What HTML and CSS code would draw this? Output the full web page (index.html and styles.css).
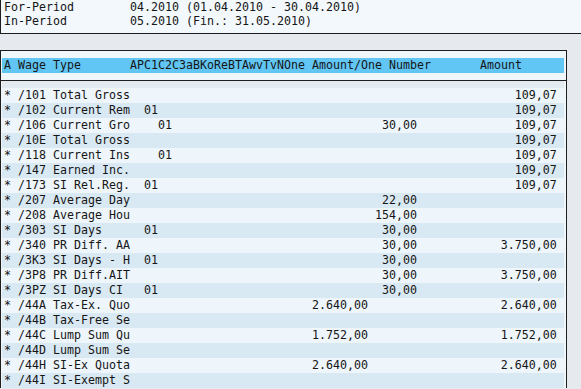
FILE: index.html
```html
<!DOCTYPE html>
<html>
<head>
<meta charset="utf-8">
<link rel="stylesheet" href="styles.css">
</head>
<body>
<div class="period">
  <div class="pline">For-Period        04.2010 (01.04.2010 - 30.04.2010)</div>
  <div class="pline">In-Period         05.2010 (Fin.: 31.05.2010)</div>
</div>
<div class="list">
  <div class="head">A Wage Type       APC1C2C3aBKoReBTAwvTvNOne Amount/One Number       Amount</div>
  <div class="sep"></div>
  <div class="gaprow"></div>
  <div class="rows">
    <div class="row"><span>*</span><span>/101</span><span>Total Gross</span><span></span><span></span><span></span><span>109,07</span></div>
    <div class="row"><span>*</span><span>/102</span><span>Current Rem</span><span>  01</span><span></span><span></span><span>109,07</span></div>
    <div class="row"><span>*</span><span>/106</span><span>Current Gro</span><span>    01</span><span></span><span>30,00</span><span>109,07</span></div>
    <div class="row"><span>*</span><span>/10E</span><span>Total Gross</span><span></span><span></span><span></span><span>109,07</span></div>
    <div class="row"><span>*</span><span>/118</span><span>Current Ins</span><span>    01</span><span></span><span></span><span>109,07</span></div>
    <div class="row"><span>*</span><span>/147</span><span>Earned Inc.</span><span></span><span></span><span></span><span>109,07</span></div>
    <div class="row"><span>*</span><span>/173</span><span>SI Rel.Reg.</span><span>  01</span><span></span><span></span><span>109,07</span></div>
    <div class="row"><span>*</span><span>/207</span><span>Average Day</span><span></span><span></span><span>22,00</span><span></span></div>
    <div class="row"><span>*</span><span>/208</span><span>Average Hou</span><span></span><span></span><span>154,00</span><span></span></div>
    <div class="row"><span>*</span><span>/303</span><span>SI Days</span><span>  01</span><span></span><span>30,00</span><span></span></div>
    <div class="row"><span>*</span><span>/340</span><span>PR Diff. AA</span><span></span><span></span><span>30,00</span><span>3.750,00</span></div>
    <div class="row"><span>*</span><span>/3K3</span><span>SI Days - H</span><span>  01</span><span></span><span>30,00</span><span></span></div>
    <div class="row"><span>*</span><span>/3P8</span><span>PR Diff.AIT</span><span></span><span></span><span>30,00</span><span>3.750,00</span></div>
    <div class="row"><span>*</span><span>/3PZ</span><span>SI Days CI</span><span>  01</span><span></span><span>30,00</span><span></span></div>
    <div class="row"><span>*</span><span>/44A</span><span>Tax-Ex. Quo</span><span></span><span>2.640,00</span><span></span><span>2.640,00</span></div>
    <div class="row"><span>*</span><span>/44B</span><span>Tax-Free Se</span><span></span><span></span><span></span><span></span></div>
    <div class="row"><span>*</span><span>/44C</span><span>Lump Sum Qu</span><span></span><span>1.752,00</span><span></span><span>1.752,00</span></div>
    <div class="row"><span>*</span><span>/44D</span><span>Lump Sum Se</span><span></span><span></span><span></span><span></span></div>
    <div class="row"><span>*</span><span>/44H</span><span>SI-Ex Quota</span><span></span><span>2.640,00</span><span></span><span>2.640,00</span></div>
    <div class="row"><span>*</span><span>/44I</span><span>SI-Exempt S</span><span></span><span></span><span></span><span></span></div>
  </div>
</div>
</body>
</html>
```
FILE: styles.css
```css
html, body {
  margin: 0;
  padding: 0;
  height: 100%;
  overflow: hidden;
}
body {
  background: #e6eaee;
  font-family: "DejaVu Sans Mono", monospace;
  font-size: 11.63px;
  color: #151515;
}
.period {
  background: #f2f8fc;
  border-left: 1px solid #1e1e1e;
  border-bottom: 1px solid #1e1e1e;
  height: 33px;
}
.pline {
  height: 14px;
  line-height: 14px;
  padding-left: 3px;
  white-space: pre;
}
.list {
  margin-top: 16px;
  width: 562px;
  border: 1px solid #1e1e1e;
  border-bottom: none;
  background: #f0f7fb;
  padding: 7px 2px 0 1px;
}
.head {
  background: #62c6f4;
  height: 15px;
  line-height: 15px;
  padding-left: 2px;
  white-space: pre;
}
.sep {
  height: 7px;
  border-bottom: 1px solid #1e1e1e;
  margin: 0 -2px 0 -1px;
}
.gaprow {
  height: 7px;
  background: #e4ebf0;
}
.row {
  display: grid;
  grid-template-columns: 2ch 5ch 11ch 26ch 8ch 7ch 20ch;
  height: 15px;
  line-height: 15px;
  padding-left: 2px;
  background: #eef6fc;
  white-space: pre;
}
.row:nth-child(even) {
  background: #d9e9f3;
}
.row span:nth-child(5),
.row span:nth-child(6),
.row span:nth-child(7) {
  text-align: right;
}
```
